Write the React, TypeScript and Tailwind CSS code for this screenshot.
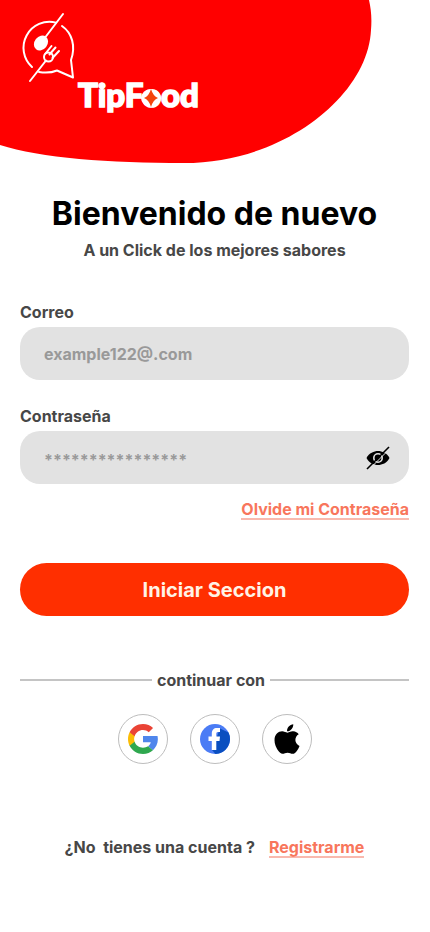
import type { ReactNode } from "react"
import { FaApple } from "react-icons/fa"

function App() {
  return (
    <div className="min-h-screen bg-white font-['Inter',sans-serif] font-bold text-[#474747]">
      <Header />
      <main className="flex flex-col pt-[31px] pr-[21px] pb-16 pl-5">
        <h1 className="text-center text-[32px] leading-10 text-black">Bienvenido de nuevo</h1>
        <p className="mt-1 text-center text-base">A un Click de los mejores sabores</p>
        <LoginForm />
        <SocialLogin />
        <p className="mt-[71px] flex items-baseline justify-center gap-[14px] text-base">
          <span className="whitespace-pre">¿No  tienes una cuenta ?</span>
          <TextLink href="#registro">Registrarme</TextLink>
        </p>
      </main>
    </div>
  )
}

function Header() {
  return (
    <header>
      <svg aria-label="TipFood" className="block h-auto w-full" role="img" viewBox="0 0 430 163">
        <path
          d="M0 0H369C371 9 372 18 371 30C368 95 285 163 184 163C110 163 40 158 0 145Z"
          fill="#ff0000"
        />
        <g fill="none" stroke="#fff" strokeLinecap="round" strokeLinejoin="round" strokeWidth="2">
          <path d="M32 67A26 26 0 0 1 56 22.6" />
          <path d="M62 26C72 33 76 46 71 60L73 77.5L57 70.5C51 73 45 73 39 72" />
          <path d="M63 14L44 39" />
          <path d="M30 81L46 60.5" />
          <circle cx="48.5" cy="57" r="4.5" />
          <path d="M45.5 53.5L51.5 46M49.5 54.5L55.5 47.5M52.5 58L59 51" />
        </g>
        <ellipse cx="41" cy="43" fill="#fff" rx="6.5" ry="8" transform="rotate(38 41 43)" />
        <text
          className="font-['Lato',sans-serif] font-black"
          fill="#fff"
          fontSize="33"
          stroke="#fff"
          strokeWidth="1.6"
          x="78"
          y="107"
        >
          TipFood
        </text>
        <ellipse cx="151" cy="98" fill="#fff" rx="10" ry="9" />
        <path
          d="M151 89Q153 96 158 98Q153 100 151 107Q149 100 144 98Q149 96 151 89Z"
          fill="#f4450c"
        />
      </svg>
    </header>
  )
}

function LoginForm() {
  return (
    <form className="mt-10 flex flex-col" onSubmit={(event) => event.preventDefault()}>
      <label className="text-base leading-5" htmlFor="correo">
        Correo
      </label>
      <input
        className="mt-[5px] h-[53px] w-full rounded-[20px] bg-[#e2e2e2] px-6 text-base placeholder:text-[#999]"
        id="correo"
        placeholder="example122@.com"
        type="email"
      />
      <label className="mt-[26px] text-base leading-5" htmlFor="contrasena">
        Contraseña
      </label>
      <div className="mt-[5px] flex h-[53px] items-center rounded-[20px] bg-[#e2e2e2] pr-[19px] pl-6">
        <input
          className="min-w-0 grow pt-1 text-base placeholder:text-[#999]"
          id="contrasena"
          placeholder="****************"
          type="password"
        />
        <button aria-label="Mostrar contraseña" type="button">
          <HiddenEye />
        </button>
      </div>
      <div className="mt-4 flex justify-end">
        <TextLink href="#recuperar">Olvide mi Contraseña</TextLink>
      </div>
      <button
        className="mt-[43px] h-[53px] w-full rounded-full bg-[#ff2f00] text-xl text-[#fff3e6]"
        type="submit"
      >
        Iniciar Seccion
      </button>
    </form>
  )
}

function TextLink({ children, href }: { children: ReactNode; href: string }) {
  return (
    <a className="border-b-2 border-[#f9b9ae] text-base leading-[18px] text-[#f8765c]" href={href}>
      {children}
    </a>
  )
}

function HiddenEye() {
  return (
    <svg className="size-6" fill="none" viewBox="0 0 24 24">
      <path d="M0.5 12C3 7 8 5 12 5S21 7 23.5 12C21 17 16 19 12 19S3 17 0.5 12Z" fill="#000" />
      <circle cx="12" cy="12" r="4.2" stroke="#e2e2e2" strokeWidth="1.6" />
      <path d="M3.5 23L24 2.5" stroke="#e2e2e2" />
      <path d="M1 23L23 1" stroke="#000" strokeWidth="1.6" />
    </svg>
  )
}

function SocialLogin() {
  return (
    <section>
      <div className="mt-13 flex items-center gap-[5px]">
        <span className="h-0.5 flex-[19] bg-[#c4c4c4]" />
        <h2 className="text-base">continuar con</h2>
        <span className="h-0.5 flex-[20] bg-[#c4c4c4]" />
      </div>
      <div className="mt-[22px] flex justify-center gap-[22px]">
        <SocialButton label="Google">
          <GoogleLogo />
        </SocialButton>
        <SocialButton label="Facebook">
          <FacebookLogo />
        </SocialButton>
        <SocialButton label="Apple">
          <FaApple className="size-[34px] text-black" />
        </SocialButton>
      </div>
    </section>
  )
}

function SocialButton({ children, label }: { children: ReactNode; label: string }) {
  return (
    <button
      aria-label={label}
      className="flex size-[50px] items-center justify-center rounded-full border border-[#bdbdbd]"
      type="button"
    >
      {children}
    </button>
  )
}

function GoogleLogo() {
  return (
    <svg className="size-[30px]" viewBox="1 1 22 22">
      <path
        d="M22.9 12.25c0-.78-.1-1.7-.25-2.45H12v4.5h5.7c-.26 1.2-1.04 2.3-2 3.1l3.57 2.94c2.08-1.92 3.63-4.74 3.63-8.09z"
        fill="#4f86ec"
      />
      <path
        d="M12 23c2.97 0 5.46-.98 7.28-2.66l-3.57-2.94c-.98.66-2.23 1.06-3.71 1.06-2.86 0-5.29-1.76-6.16-4.36H2.18v2.83C3.99 20.53 7.7 23 12 23z"
        fill="#2fa84f"
      />
      <path
        d="M5.84 14.09c-.22-.66-.35-1.36-.35-2.09s.13-1.43.35-2.09V7.07H2.18C1.43 8.55 1 10.22 1 12s.43 3.45 1.18 4.93l3.66-2.84z"
        fill="#fbbc05"
      />
      <path
        d="M12 5.38c1.62 0 3.06.56 4.21 1.64l3.15-3.15C17.45 2.09 14.97 1 12 1 7.7 1 3.99 3.47 2.18 7.07l3.66 2.84c.87-2.6 3.3-4.53 6.16-4.53z"
        fill="#ea4335"
      />
    </svg>
  )
}

function FacebookLogo() {
  return (
    <svg className="size-[30px]" viewBox="0 0 30 30">
      <circle cx="15" cy="15" fill="#4b7cf5" r="15" />
      <path d="M20 4.5L28.5 8.5A15 15 0 0 1 15.5 30L12 26Z" fill="#0a4fc0" />
      <path
        d="M11.8 26V17H8.5V12.5H11.8V9.5C11.8 6 13.8 4 17 4H20V8H18C16.7 8 16.3 8.7 16.3 10V12.5H20L19.5 17H16.3V26Z"
        fill="#fff"
      />
    </svg>
  )
}

export default App
